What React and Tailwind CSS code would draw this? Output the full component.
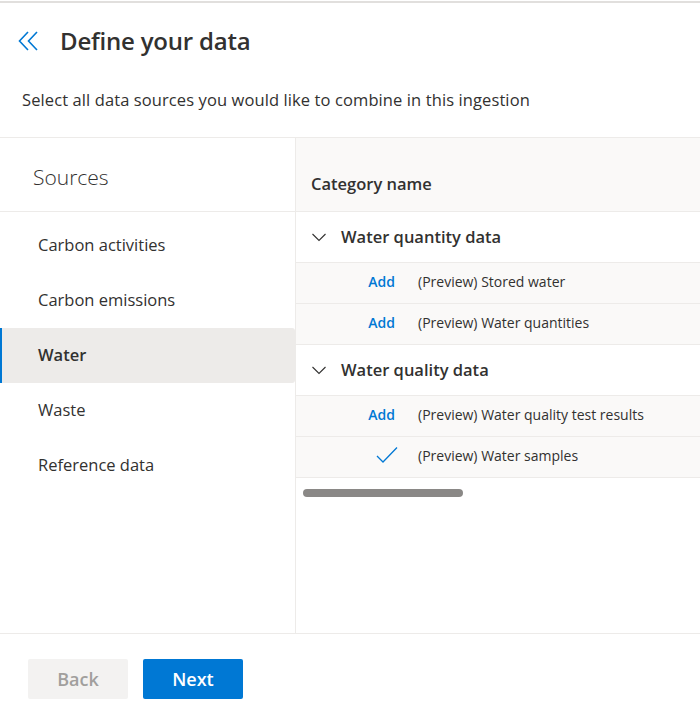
import React from 'react';

const sources = ['Carbon activities', 'Carbon emissions', 'Water', 'Waste', 'Reference data'];

const groups = [
  {
    name: 'Water quantity data',
    items: [
      { name: '(Preview) Stored water', added: false },
      { name: '(Preview) Water quantities', added: false },
    ],
  },
  {
    name: 'Water quality data',
    items: [
      { name: '(Preview) Water quality test results', added: false },
      { name: '(Preview) Water samples', added: true },
    ],
  },
];

function Chevron() {
  return (
    <svg className="w-[16px] h-[16px]" viewBox="0 0 16 16" fill="none" stroke="#323130" strokeWidth="1.1">
      <polyline points="1.5,5 8,11.5 14.5,5" />
    </svg>
  );
}

function Check() {
  return (
    <svg className="w-[22px] h-[18px]" viewBox="0 0 22 18" fill="none" stroke="#0078d4" strokeWidth="1.3">
      <polyline points="1,10 7,16 21,1.5" />
    </svg>
  );
}

function BackIcon() {
  return (
    <svg className="w-[22px] h-[20px]" viewBox="0 0 22 20" fill="none" stroke="#0078d4" strokeWidth="1.6">
      <polyline points="10,1 1.5,10 10,19" />
      <polyline points="19,1 10.5,10 19,19" />
    </svg>
  );
}

export default function App() {
  return (
    <div className="w-[700px] h-[712px] bg-white flex flex-col text-[#323130] overflow-hidden" style={{ fontFamily: '"Open Sans", "Noto Sans", sans-serif' }}>
      <div className="h-[2px] bg-[#e1dfdd] mt-[1px]" />
      {/* Header */}
      <div className="flex items-center h-[76px] pl-[18px]">
        <BackIcon />
        <h1 className="ml-[20px] text-[24px] font-semibold tracking-[-0.2px]">Define your data</h1>
      </div>
      <p className="pl-[22px] text-[16.5px] tracking-[0.1px] h-[58px] pt-[9px]">Select all data sources you would like to combine in this ingestion</p>

      {/* Main */}
      <div className="flex h-[497px] border-t border-b border-[#edebe9]">
        {/* Sources */}
        <div className="w-[296px] shrink-0 border-r border-[#edebe9]">
          <div className="h-[74px] border-b border-[#edebe9] flex items-center pl-[33px] pt-[6px] text-[21px] font-light">Sources</div>
          <div className="flex flex-col pt-[6px]">
            {sources.map((s) =>
              s === 'Water' ? (
                <div key={s} className="h-[55px] flex items-center pl-[36px] bg-[#edebe9] border-l-2 border-[#0078d4] text-[16.5px] font-semibold rounded-r-[3px]">
                  {s}
                </div>
              ) : (
                <div key={s} className="h-[55px] flex items-center pl-[38px] text-[16.5px]">
                  {s}
                </div>
              )
            )}
          </div>
        </div>

        {/* Categories */}
        <div className="flex-1 min-w-0 flex flex-col">
          <div className="h-[74px] bg-[#faf9f8] border-b border-[#edebe9] flex items-center pl-[15px] pt-[20px] text-[16.5px] font-semibold">
            Category name
          </div>
          {groups.map((g) => (
            <div key={g.name}>
              <div className="h-[51px] flex items-center pl-[15px] border-b border-[#edebe9]">
                <Chevron />
                <span className="ml-[14px] text-[16.5px] font-semibold">{g.name}</span>
              </div>
              {g.items.map((it) => (
                <div key={it.name} className="h-[41px] flex items-center pb-[4px] bg-[#faf9f8] border-b border-[#edebe9] text-[14px]">
                  <div className="w-[122px] shrink-0 flex justify-end pr-[23px]">
                    {it.added ? (
                      <span className="mr-[-3px] flex"><Check /></span>
                    ) : (
                      <span className="text-[#0078d4] font-semibold">Add</span>
                    )}
                  </div>
                  <span className="whitespace-nowrap">{it.name}</span>
                </div>
              ))}
            </div>
          ))}
          <div className="pl-[7px] pt-[11px]">
            <div className="w-[160px] h-[8px] rounded-full bg-[#8a8886]" />
          </div>
        </div>
      </div>

      {/* Footer */}
      <div className="flex gap-[15px] pl-[28px] pt-[25px]">
        <button className="w-[100px] h-[40px] rounded-[2px] bg-[#f3f2f1] text-[#a19f9d] text-[18px] font-semibold">Back</button>
        <button className="w-[100px] h-[40px] rounded-[2px] bg-[#0078d4] text-white text-[18px] font-semibold">Next</button>
      </div>
    </div>
  );
}
